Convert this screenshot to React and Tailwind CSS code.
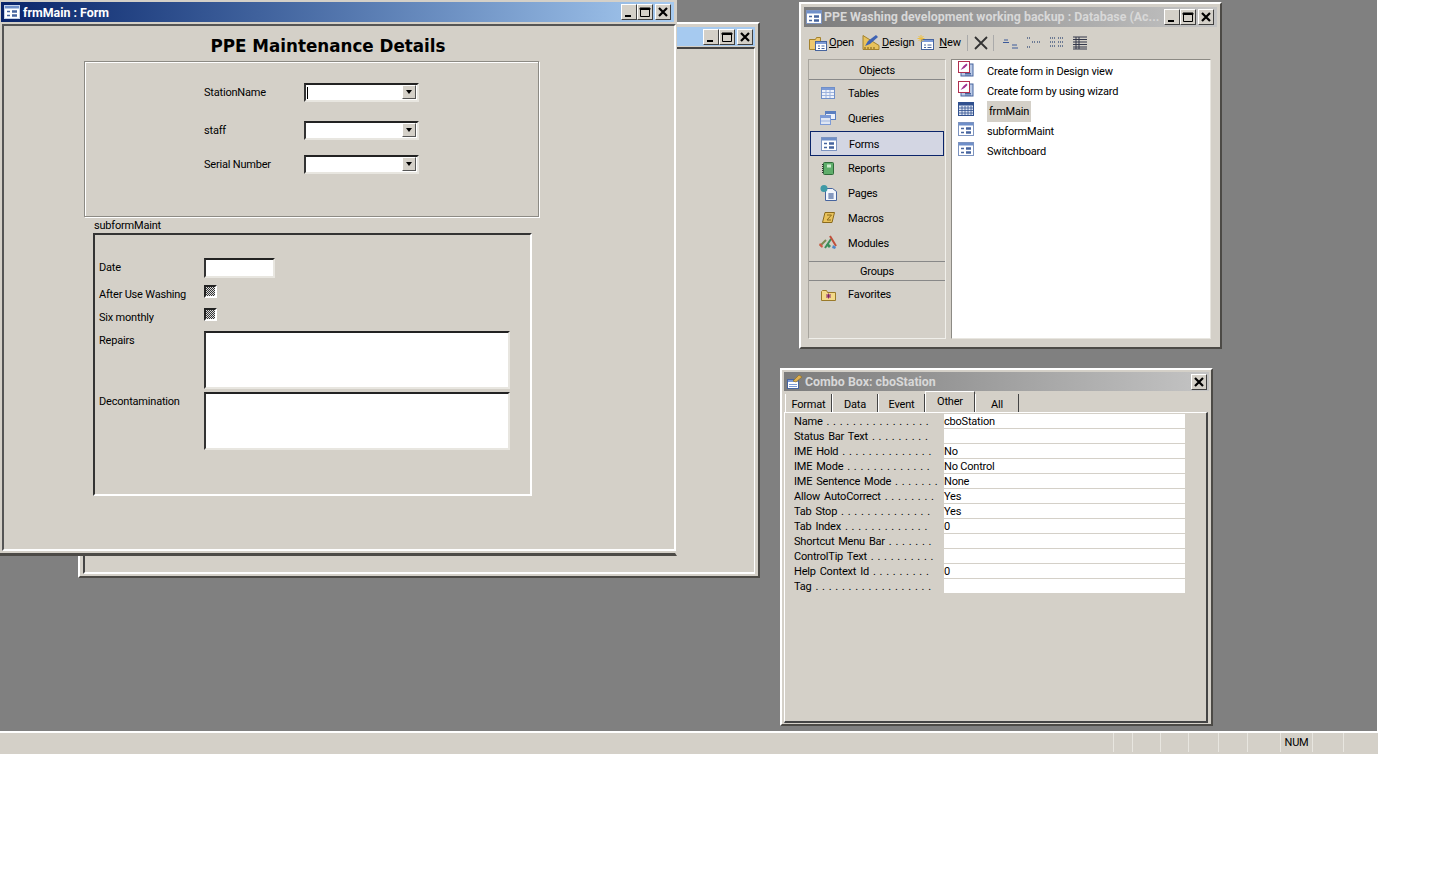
const FONT = "font-['Roboto','Noto_Sans','Liberation_Sans',sans-serif] tracking-[-0.2px]";

function CaptionButton({ type }) {
  return (
    <div className="w-4 h-4 bg-[#d4d0c8] border border-t-white border-l-white border-r-[#404040] border-b-[#404040] flex items-center justify-center">
      <svg width="12" height="12" viewBox="0 0 12 12">
        {type === "min" && <rect x="2" y="9" width="6" height="2" fill="#000" />}
        {type === "max" && <path d="M1.5 2.5h9v8h-9z M1 2h10v1.5H1z" fill="none" stroke="#000" />}
        {type === "close" && <path d="M2 2l8 8M10 2l-8 8" stroke="#000" strokeWidth="2.2" />}
      </svg>
    </div>
  );
}

function CaptionButtons() {
  return (
    <div className="flex items-center shrink-0">
      <CaptionButton type="min" />
      <CaptionButton type="max" />
      <div className="ml-0.5">
        <CaptionButton type="close" />
      </div>
    </div>
  );
}

function FormIcon({ dark }) {
  return (
    <svg width="16" height="14" viewBox="0 0 16 14" className="shrink-0">
      <rect x="0.5" y="0.5" width="15" height="13" fill="#fff" stroke={dark ? "#c6d3ea" : "#7d94c0"} />
      <rect x="1" y="1" width="14" height="2.5" fill="#6f8fc9" />
      <path d="M3 6.500h3M3 10.500h3" stroke="#46649e" strokeWidth="1.6" />
      <path d="M8 6.500h5M8 10.500h5" stroke="#46649e" strokeWidth="2.4" />
    </svg>
  );
}

function DesignFormIcon() {
  return (
    <svg width="16" height="16" viewBox="0 0 16 16" className="shrink-0">
      <rect x="3" y="3" width="12" height="12" fill="#b9c9e6" stroke="#46649e" />
      <rect x="0.5" y="0.5" width="11" height="11" fill="#fff" stroke="#b03050" />
      <path d="M2.500 9l3-4 3-2.500 1 1.500-3 3z" fill="#a03090" />
      <path d="M7 14h6M7 12.500h6" stroke="#46649e" />
    </svg>
  );
}

function GridIcon() {
  return (
    <svg width="16" height="14" viewBox="0 0 16 14" className="shrink-0">
      <rect x="0.5" y="0.5" width="15" height="13" fill="#dfe6f3" stroke="#30508f" />
      <rect x="1" y="1" width="14" height="2.5" fill="#30508f" />
      <path d="M1 6h14M1 8.500h14M1 11h14M4 4v9M7 4v9M10 4v9M13 4v9" stroke="#30508f" strokeWidth="0.8" />
    </svg>
  );
}

function TablesIcon() {
  return (
    <svg width="14" height="12" viewBox="0 0 14 12" className="shrink-0">
      <rect x="0.5" y="0.5" width="13" height="11" fill="#eef2fa" stroke="#6f8fc9" />
      <rect x="1" y="1" width="12" height="2" fill="#7d9bd6" />
      <path d="M1 5.500h12M1 8.500h12M5 3v8M9 3v8" stroke="#9db3de" />
    </svg>
  );
}

function QueriesIcon() {
  return (
    <svg width="16" height="14" viewBox="0 0 16 14" className="shrink-0">
      <rect x="5.500" y="0.5" width="10" height="8" fill="#eef2fa" stroke="#5b7fc0" />
      <rect x="6" y="1" width="9" height="2" fill="#5b7fc0" />
      <rect x="0.5" y="4.500" width="10" height="9" fill="#dfe6f3" stroke="#7d9bd6" />
      <rect x="1" y="5" width="9" height="2" fill="#7d9bd6" />
      <path d="M1 10h9" stroke="#9db3de" />
    </svg>
  );
}

function ReportsIcon() {
  return (
    <svg width="12" height="13" viewBox="0 0 12 13" className="shrink-0">
      <rect x="1.500" y="0.5" width="10" height="12" rx="1" fill="#5fae6b" stroke="#2f6b3a" />
      <rect x="5" y="2.500" width="4" height="3" fill="#cfeccf" />
      <path d="M0.5 2v9" stroke="#333" strokeDasharray="1 1" strokeWidth="1.4" />
    </svg>
  );
}

function PagesIcon() {
  return (
    <svg width="17" height="16" viewBox="0 0 17 16" className="shrink-0">
      <path d="M5.500 3.500h7l4 3v9h-11z" fill="#f3f6fc" stroke="#46649e" />
      <circle cx="4" cy="3.500" r="3.500" fill="#3f9aa6" />
      <path d="M8 9h6M8 11h6M8 13h6M10 8v6M12 8v6" stroke="#46649e" strokeWidth="0.8" />
    </svg>
  );
}

function MacrosIcon() {
  return (
    <svg width="13" height="11" viewBox="0 0 13 11" className="shrink-0">
      <path d="M3 0.5h9.500L10 10.500H0.5z" fill="#e8c25c" stroke="#8a6a1c" />
      <path d="M5 3h4.500L5 8h4" fill="none" stroke="#8a6a1c" />
    </svg>
  );
}

function ModulesIcon() {
  return (
    <svg width="18" height="15" viewBox="0 0 18 15" className="shrink-0">
      <path d="M1 11l6-6" stroke="#7a8a50" strokeWidth="2" />
      <path d="M6 13l6-9" stroke="#3c8f5a" strokeWidth="2" />
      <path d="M11 1l6 10" stroke="#c0503c" strokeWidth="2" />
      <path d="M1 8l3 3-1 2-3-3z" fill="#d05a46" />
      <path d="M14 10l3 2-1 2-3-1z" fill="#4c86c8" />
      <path d="M9 8l3 3-2 2-3-3z" fill="#3c8f5a" />
    </svg>
  );
}

function FavoritesIcon() {
  return (
    <svg width="15" height="12" viewBox="0 0 15 12" className="shrink-0">
      <path d="M0.5 2.500v9h14v-8h-8l-1-2h-4z" fill="#f3d98a" stroke="#9a7a2a" />
      <path d="M7.500 4.500v5M5 7h5M5.500 5l4 4M9.500 5l-4 4" stroke="#7a1a6a" strokeWidth="0.9" />
    </svg>
  );
}

function PropsIcon() {
  return (
    <svg width="16" height="15" viewBox="0 0 16 15" className="shrink-0">
      <rect x="0.5" y="5.500" width="11" height="9" fill="#fff" stroke="#46649e" />
      <rect x="1" y="6" width="10" height="2" fill="#7d9bd6" />
      <path d="M2 10.500h8M2 12.500h8" stroke="#7d9bd6" />
      <path d="M6 7l6-6 3 2-6 5z" fill="#e0b050" stroke="#8a6a1c" strokeWidth="0.6" />
    </svg>
  );
}

function OpenIcon() {
  return (
    <svg width="18" height="16" viewBox="0 0 18 16" className="shrink-0">
      <path d="M0.5 4.500h6l1-2h4v12h-11z" fill="#eec86e" stroke="#a4822c" />
      <rect x="6.500" y="6.500" width="11" height="9" fill="#fff" stroke="#46649e" />
      <rect x="7" y="7" width="10" height="2" fill="#7d9bd6" />
      <path d="M9 11h2M9 13.500h2M12.500 11h3M12.500 13.500h3" stroke="#46649e" />
    </svg>
  );
}

function DesignIcon() {
  return (
    <svg width="18" height="16" viewBox="0 0 18 16" className="shrink-0">
      <path d="M1 0.5v14h16v-4z" fill="#e8c25c" stroke="#a4822c" />
      <path d="M3 11l3-5 8-6 2 2-8 7z" fill="#3f63b4" />
      <path d="M3 14v-2M6 14v-2M9 14v-2M12 14v-2" stroke="#7a5c14" />
    </svg>
  );
}

function NewIcon() {
  return (
    <svg width="17" height="16" viewBox="0 0 17 16" className="shrink-0">
      <rect x="4.500" y="4.500" width="12" height="10" fill="#fff" stroke="#46649e" />
      <rect x="5" y="5" width="11" height="2" fill="#7d9bd6" />
      <path d="M7 10h2M7 12.500h2M10.500 10h4M10.500 12.500h4" stroke="#46649e" />
      <path d="M4 0v7M0.5 3.500h7M1.500 1l5 5M6.500 1l-5 5" stroke="#f0c040" />
    </svg>
  );
}

function ToolGlyph({ type }) {
  return (
    <svg width="16" height="14" viewBox="0 0 16 14" className="shrink-0">
      {type === "large" && <path d="M1 4h4M0 6.500h6M9 9h5M9 12h6" stroke="#3c5a9a" />}
      {type === "small" && <path d="M1 2h3M6 6h3M11 6h3M1 11h3" stroke="#6c7a94" strokeDasharray="1 1" strokeWidth="2" />}
      {type === "list" && <path d="M1 2h5M1 6h5M1 10h5M9 2h5M9 6h5M9 10h5" stroke="#6c7a94" strokeDasharray="1 1" strokeWidth="2" />}
      {type === "detail" && <path d="M1 1h14M1 3.500h14M1 6h14M1 8.500h14M1 11h14M1 13h14M4 1v12M7 1v12" stroke="#34384a" strokeWidth="1" />}
    </svg>
  );
}

function Sunken({ className, children }) {
  return (
    <div className={"bg-white border-2 border-t-[#222] border-l-[#333] border-r-[#e8e6e0] border-b-[#e8e6e0] " + className}>
      {children}
    </div>
  );
}

function Combo({ caret }) {
  return (
    <Sunken className="w-[115px] h-[19px] flex items-center justify-end relative">
      {caret && <div className="absolute left-px top-0.5 w-px h-3 bg-black" />}
      <div className="w-3.5 h-3.5 mr-px bg-[#d4d0c8] border border-t-white border-l-white border-r-[#555] border-b-[#555] flex items-center justify-center">
        <div className="w-0 h-0 border-x-[3px] border-x-transparent border-t-[4px] border-t-black" />
      </div>
    </Sunken>
  );
}

function Check() {
  return (
    <div className="w-[13px] h-[13px] bg-[#e8e6e0] border-2 border-t-[#222] border-l-[#222] border-r-white border-b-white flex items-center justify-center">
      <div className="w-[9px] h-[9px] bg-[repeating-conic-gradient(#333_0_25%,#ddd_0_50%)] bg-[length:2px_2px]" />
    </div>
  );
}

function FormWindow() {
  return (
    <div className="absolute left-0 top-0 w-[677px] h-[556px] bg-[#d4d0c8] border-b-[3px] border-r-2 border-b-[#4c4a46] border-r-[#d4d0c8] pt-0.5 pl-px">
      <div className="h-5 mr-px pl-[3px] pr-[3px] flex items-center bg-gradient-to-r from-[#0a246a] to-[#a6caf0] text-white">
        <FormIcon dark />
        <span className="ml-[3px] text-[12.4px] font-bold tracking-normal pt-0.5">frmMain : Form</span>
        <div className="ml-auto"><CaptionButtons /></div>
      </div>
      <div className="mt-0.5 ml-px h-[527px] w-[674px] border-2 border-t-[#555] border-l-[#555] border-r-white border-b-white">
        <h1 className="text-center text-[16.75px] leading-6 font-bold text-black pt-2 pr-[22px] tracking-normal font-['DejaVu_Sans',sans-serif]">PPE Maintenance Details</h1>
        <div className="mt-[3px] ml-20 w-[455px] h-[156px] border border-[#8c8a84] shadow-[inset_1px_1px_0_#fff,1px_1px_0_#fff] pl-[119px] pt-[21px] flex flex-col">
          <div className="flex items-center h-[18px]">
            <span className="w-[100px] text-[11px] pt-0.5">StationName</span>
            <Combo caret />
          </div>
          <div className="flex items-center h-[18px] mt-5">
            <span className="w-[100px] text-[11px] pt-0.5">staff</span>
            <Combo />
          </div>
          <div className="flex items-center h-[18px] mt-4">
            <span className="w-[100px] text-[11px] pt-0.5">Serial Number</span>
            <Combo />
          </div>
        </div>
        <div className="ml-[90px] h-4 text-[11px] leading-[18px]">subformMaint</div>
        <div className="ml-[89px] w-[439px] h-[263px] border-2 border-t-[#333] border-l-[#333] border-r-white border-b-white pl-1 pt-[23px] flex flex-col">
          <div className="flex items-start h-5">
            <span className="w-[105px] text-[11px] leading-5">Date</span>
            <Sunken className="w-[71px] h-5" />
          </div>
          <div className="flex items-start h-[13px] mt-[7px]">
            <span className="w-[105px] text-[11px] leading-5 whitespace-nowrap">After Use Washing</span>
            <Check />
          </div>
          <div className="flex items-start h-[13px] mt-2.5">
            <span className="w-[105px] text-[11px] leading-5">Six monthly</span>
            <Check />
          </div>
          <div className="flex items-start h-[58px] mt-2.5">
            <span className="w-[105px] text-[11px] leading-5">Repairs</span>
            <Sunken className="w-[306px] h-[58px]" />
          </div>
          <div className="flex items-start h-[58px] mt-[3px]">
            <span className="w-[105px] text-[11px] leading-5">Decontamination</span>
            <Sunken className="w-[306px] h-[58px]" />
          </div>
        </div>
      </div>
    </div>
  );
}

function BackWindow() {
  return (
    <div className="absolute left-[78px] top-[22px] w-[682px] h-[556px] bg-[#d4d0c8] border-2 border-t-white border-l-white border-r-[#4c4a46] border-b-[#4c4a46] p-[3px]">
      <div className="h-[19px] flex items-center justify-end pr-0.5 bg-[#a6caf0]">
        <CaptionButtons />
      </div>
      <div className="h-[527px] mt-px border-l-2 border-t-2 border-b-2 border-r border-l-[#444] border-t-[#444] border-b-white border-r-white" />
    </div>
  );
}

const objects = [
  { name: "Tables", icon: <TablesIcon />, h: "h-[25px]" },
  { name: "Queries", icon: <QueriesIcon />, h: "h-[25px]" },
  { name: "Forms", icon: <FormIcon />, h: "h-[25px] mt-px", active: true },
  { name: "Reports", icon: <ReportsIcon />, h: "h-6" },
  { name: "Pages", icon: <PagesIcon />, h: "h-[25px]" },
  { name: "Macros", icon: <MacrosIcon />, h: "h-[25px]" },
  { name: "Modules", icon: <ModulesIcon />, h: "h-[25px]" },
];

const listItems = [
  { name: "Create form in Design view", icon: <DesignFormIcon /> },
  { name: "Create form by using wizard", icon: <DesignFormIcon /> },
  { name: "frmMain", icon: <GridIcon />, selected: true },
  { name: "subformMaint", icon: <FormIcon /> },
  { name: "Switchboard", icon: <FormIcon /> },
];

function ObjectRow({ item }) {
  return (
    <div className={"flex items-center mx-px " + item.h + (item.active ? " bg-[#d3d6e3] border border-[#0a246a]" : "")}>
      <div className="w-[36px] flex justify-center shrink-0">{item.icon}</div>
      <span className="text-[11px] ml-[2px] pt-[3px]">{item.name}</span>
    </div>
  );
}

function DatabaseWindow() {
  return (
    <div className="absolute left-[799px] top-[2px] w-[423px] h-[347px] bg-[#d4d0c8] border-2 border-t-white border-l-white border-r-[#4c4a46] border-b-[#4c4a46] p-[3px]">
      <div className="h-5 pl-0.5 pr-[3px] flex items-center bg-gradient-to-r from-[#7c7c7c] to-[#c4c4c4] text-[#d8d8d8]">
        <FormIcon />
        <span className="ml-[2px] text-[12.4px] font-bold tracking-normal whitespace-nowrap">PPE Washing development working backup : Database (Ac...</span>
        <div className="ml-auto"><CaptionButtons /></div>
      </div>
      <div className="h-[26px] mt-[3px] flex items-center pl-[5px] text-[11px]">
        <OpenIcon />
        <span className="ml-0.5 underline">O</span><span>pen</span>
        <div className="ml-2"><DesignIcon /></div>
        <span className="ml-0.5 underline">D</span><span>esign</span>
        <div className="ml-[3px]"><NewIcon /></div>
        <span className="ml-[5px] underline">N</span><span>ew</span>
        <div className="w-px h-4 bg-[#aaa] ml-1.5" />
        <svg width="16" height="14" viewBox="0 0 16 14" className="ml-[5px] shrink-0">
          <path d="M2 1l12 12M14 1L2 13" stroke="#333" strokeWidth="1.8" />
        </svg>
        <div className="w-px h-4 bg-[#aaa] ml-1" />
        <div className="flex gap-[7px] ml-[9px]">
          <ToolGlyph type="large" />
          <ToolGlyph type="small" />
          <ToolGlyph type="list" />
          <ToolGlyph type="detail" />
        </div>
      </div>
      <div className="flex mt-[3px] ml-1">
        <div className="w-[138px] h-[280px] border border-[#a8a59e] border-r-[#f0efea] border-b-[#f0efea]">
          <div className="h-[20px] text-center text-[11px] leading-[22px] border-b border-[#888]">Objects</div>
          {objects.map((item) => (
            <ObjectRow key={item.name} item={item} />
          ))}
          <div className="h-5 mt-1.5 text-center text-[11px] leading-[19px] border-y border-y-[#888]">Groups</div>
          <div className="mt-px mx-px h-[25px] flex items-center">
            <div className="w-[36px] flex justify-center shrink-0"><FavoritesIcon /></div>
            <span className="text-[11px] ml-[2px] pt-0.5">Favorites</span>
          </div>
        </div>
        <div className="w-[260px] h-[280px] ml-[5px] bg-white border border-[#8c8a84] border-r-[#e8e6e0] border-b-[#e8e6e0] pl-[5px] pt-px">
          {listItems.map((item) => (
            <div key={item.name} className="h-5 flex items-center">
              <div className="w-[17px] flex justify-center -mt-1"><div>{item.icon}</div></div>
              <span className={"ml-[13px] text-[11px] leading-[21px] " + (item.selected ? "bg-[#d4d0c8] px-0.5 -mx-0.5" : "")}>{item.name}</span>
            </div>
          ))}
        </div>
      </div>
    </div>
  );
}

const tabs = [
  { name: "Format", w: "w-[47px]" },
  { name: "Data", w: "w-[46px]" },
  { name: "Event", w: "w-[47px]" },
  { name: "Other", w: "w-[50px]", active: true },
  { name: "All", w: "w-[44px]" },
];

const props = [
  ["Name . . . . . . . . . . . . . . . .", "cboStation"],
  ["Status Bar Text . . . . . . . . .", ""],
  ["IME Hold . . . . . . . . . . . . . .", "No"],
  ["IME Mode . . . . . . . . . . . . .", "No Control"],
  ["IME Sentence Mode . . . . . . .", "None"],
  ["Allow AutoCorrect . . . . . . . .", "Yes"],
  ["Tab Stop . . . . . . . . . . . . . .", "Yes"],
  ["Tab Index . . . . . . . . . . . . .", "0"],
  ["Shortcut Menu Bar . . . . . . .", ""],
  ["ControlTip Text . . . . . . . . . .", ""],
  ["Help Context Id . . . . . . . . .", "0"],
  ["Tag . . . . . . . . . . . . . . . . . .", ""],
];

function PropertyWindow() {
  return (
    <div className="absolute left-[780px] top-[368px] w-[433px] h-[358px] bg-[#d4d0c8] border-2 border-t-white border-l-white border-r-[#4c4a46] border-b-[#4c4a46] px-[2px] pt-0.5">
      <div className="h-[19px] pl-[3px] pr-0.5 flex items-center bg-gradient-to-r from-[#7c7c7c] to-[#c4c4c4] text-[#d8d8d8]">
        <PropsIcon />
        <span className="ml-[2px] text-[12.4px] font-bold tracking-normal pt-0.5">Combo Box: cboStation</span>
        <div className="ml-auto"><CaptionButton type="close" /></div>
      </div>
      <div className="flex items-end h-[21px] pl-px">
        {tabs.map((t) => (
          <div
            key={t.name}
            className={"text-[11px] text-center border-l border-r border-l-white border-r-[#444] " + t.w + (t.active ? " h-[21px] leading-5 border-t border-t-white" : " h-[18px] leading-[21px]")}
          >
            {t.name}
          </div>
        ))}
      </div>
      <div className="h-[311px] border border-t-white border-l-white border-r-2 border-b-2 border-r-[#444] border-b-[#444] pl-[9px] pt-px mr-px">
        {props.map(([label, value]) => (
          <div key={label} className="flex h-[15px] text-[11px] leading-4">
            <span className="w-[149px] mr-px overflow-hidden whitespace-nowrap [word-spacing:1.4px]">{label}</span>
            <span className="w-[241px] h-[14px] bg-white">{value}</span>
          </div>
        ))}
      </div>
    </div>
  );
}

const statusCells = ["w-[19px]", "w-7", "w-7", "w-[30px]", "w-[29px]", "w-[33px]", "w-8", "w-[31px]", "w-[27px]"];

export default function App() {
  return (
    <div className={"min-h-screen bg-white text-black " + FONT}>
      <div className="relative h-[731px] w-[1377px] bg-[#808080] overflow-hidden">
        <BackWindow />
        <FormWindow />
        <DatabaseWindow />
        <PropertyWindow />
      </div>
      <div className="w-[1378px] h-[23px] bg-[#d4d0c8] border-t-2 border-b-2 border-t-white border-b-[#d4d0c8] flex justify-end pr-[8px]">
        {statusCells.map((w, i) => (
          <div key={i} className={"h-full text-center text-[11px] leading-5 border-l border-[#e8e6e0] " + w}>
            {i === 6 ? "NUM" : ""}
          </div>
        ))}
      </div>
    </div>
  );
}
